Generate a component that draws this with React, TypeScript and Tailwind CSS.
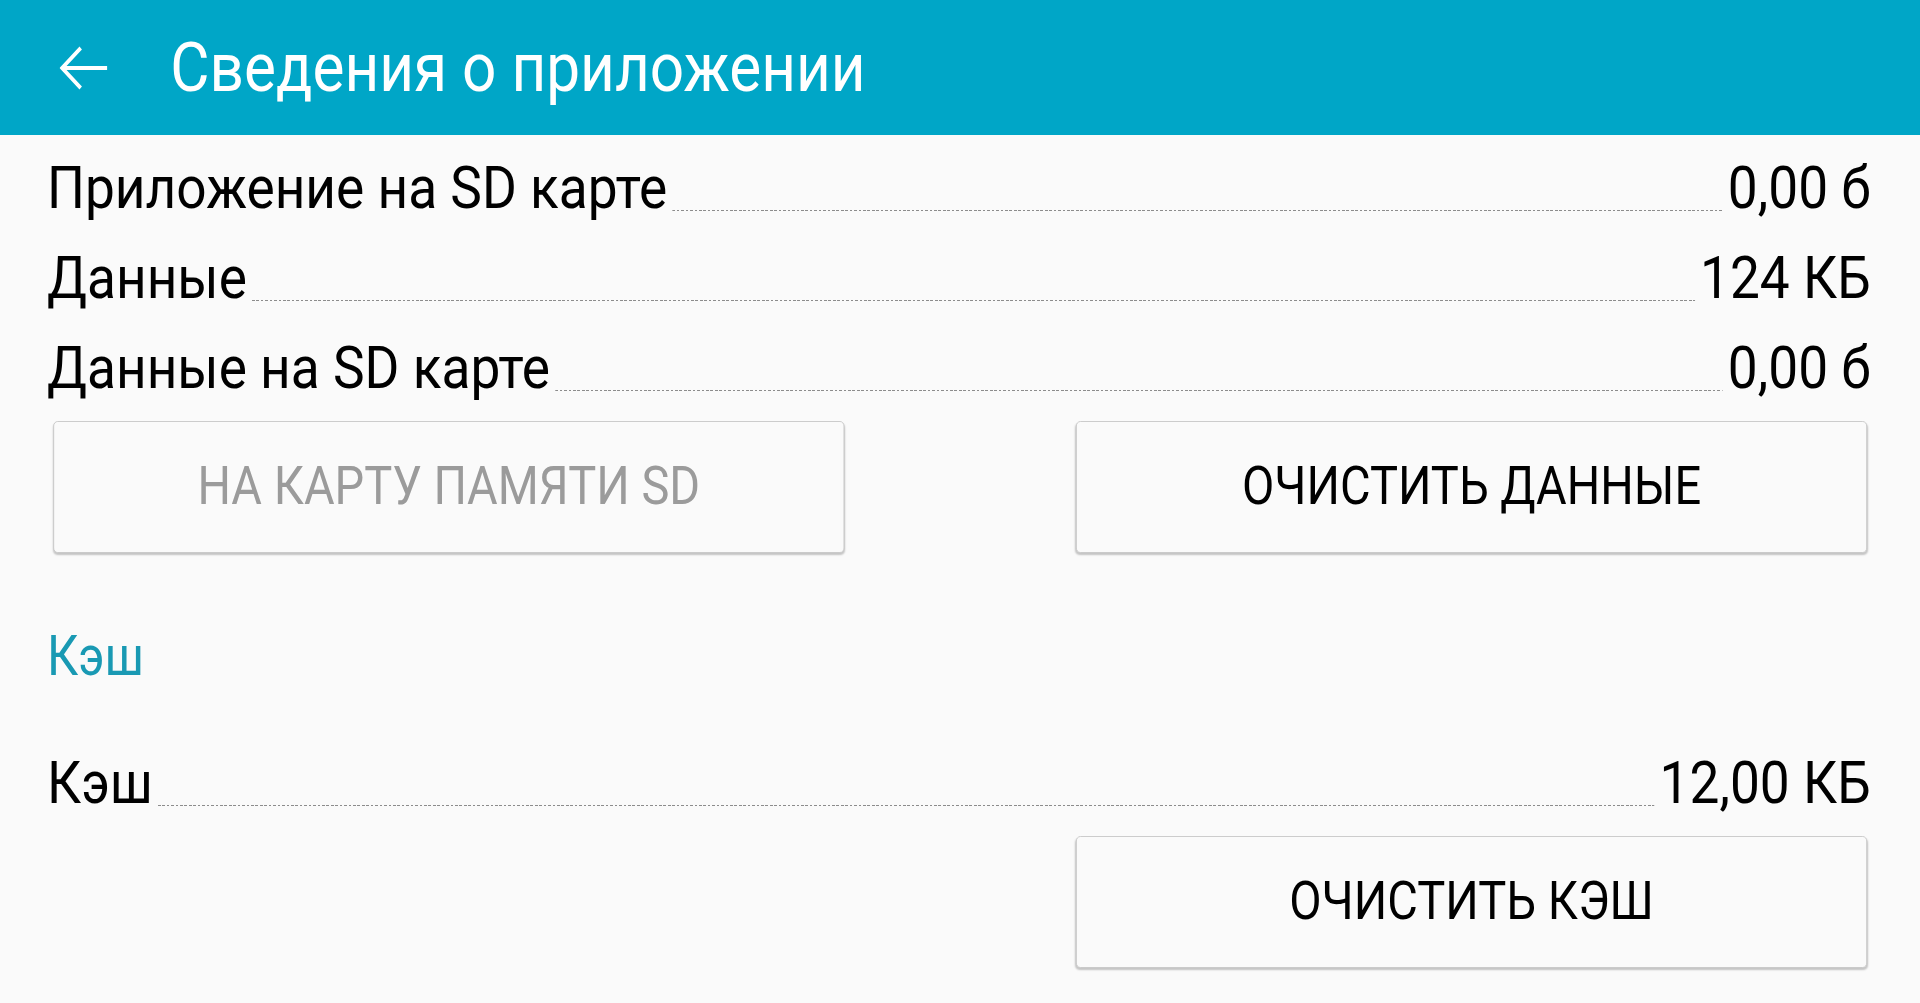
type Row = { label: string; value: string };

const rows: Row[] = [
  { label: "Приложение на SD карте", value: "0,00 б" },
  { label: "Данные", value: "124 КБ" },
  { label: "Данные на SD карте", value: "0,00 б" },
];

// the screen is laid out 2165px wide and squeezed to 1920 (the phone font is narrow)
const InfoRow = ({ label, value }: Row) => (
  <div className="flex items-end h-[90px] leading-[90px] text-[60px] text-black">
    <span>{label}</span>
    <div className="flex-1 mx-[6px] mb-[22px] h-px bg-[repeating-linear-gradient(90deg,#8c8c8c_0_3px,transparent_3px_5px)]" />
    <span>{value}</span>
  </div>
);

const CardButton = ({ label, disabled }: { label: string; disabled?: boolean }) => (
  <button
    className={
      disabled
        ? "h-[132px] rounded-[5px] border border-[#c9c9c9] bg-[#fafafa] shadow-[0_2px_2px_rgba(0,0,0,0.22)] text-[53px] text-[#9b9b9b]"
        : "h-[132px] rounded-[5px] border border-[#c9c9c9] bg-[#fafafa] shadow-[0_2px_2px_rgba(0,0,0,0.22)] text-[53px] text-black"
    }
  >
    {label}
  </button>
);

const BackArrow = () => (
  <svg viewBox="0 0 54 44" className="w-[54px] h-[44px]" fill="none" stroke="white" strokeWidth={4}>
    <path d="M3 22H54" />
    <path d="M24 2L3 22L24 42" strokeLinejoin="miter" />
  </svg>
);

export default function App() {
  return (
    <div className="w-[1920px] h-[1003px] overflow-hidden bg-[#fafafa]">
      <div className="w-[2165px] h-[1003px] origin-top-left scale-x-[0.887] font-['Roboto',sans-serif]">
        {/* app bar */}
        <div className="h-[135px] bg-[#00a6c7] flex items-center pl-[67px]">
          <BackArrow />
          <h1 className="ml-[71px] text-[68px] text-white">Сведения о приложении</h1>
        </div>

        <div className="pt-[8px] pl-[53px] pr-[56px]">
          {rows.map((r) => (
            <InfoRow key={r.label} {...r} />
          ))}
        </div>

        <div className="grid grid-cols-2 gap-[261px] px-[60px] mt-[8px]">
          <CardButton label="НА КАРТУ ПАМЯТИ SD" disabled />
          <CardButton label="ОЧИСТИТЬ ДАННЫЕ" />
        </div>

        <div className="pl-[53px] mt-[63px] h-[80px] leading-[80px] text-[55px] text-[#1999b3]">Кэш</div>

        <div className="pl-[53px] pr-[56px] mt-[42px]">
          <InfoRow label="Кэш" value="12,00 КБ" />
        </div>

        <div className="grid grid-cols-2 gap-[261px] px-[60px] mt-[8px]">
          <div />
          <CardButton label="ОЧИСТИТЬ КЭШ" />
        </div>
      </div>
    </div>
  );
}
